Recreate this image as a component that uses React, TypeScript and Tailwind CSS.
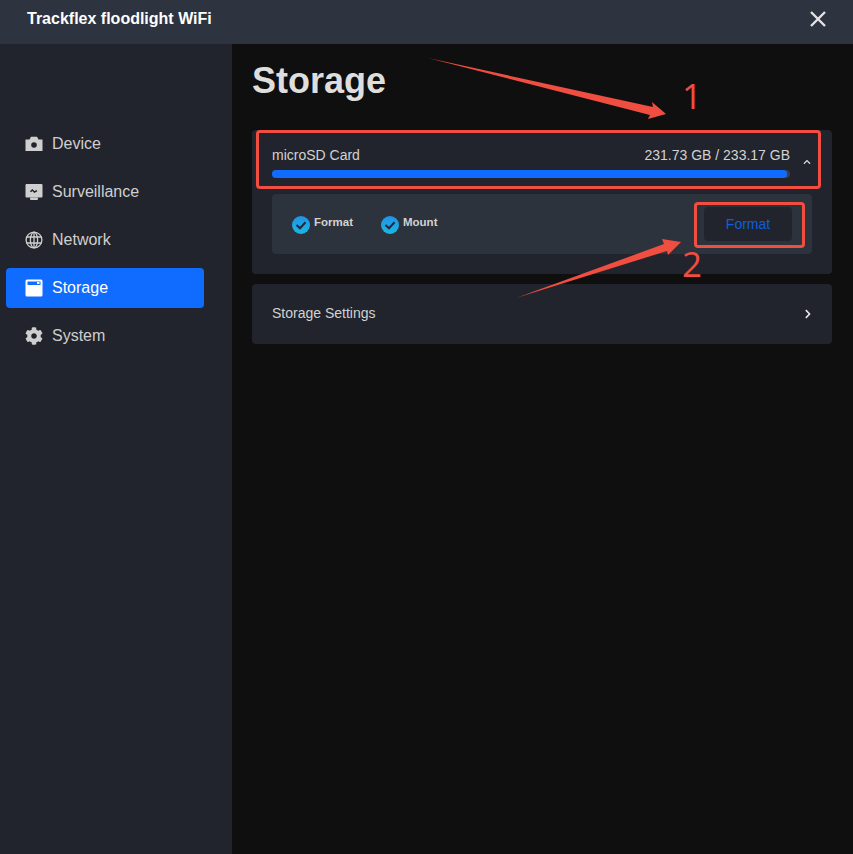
import { FaCog, FaChevronRight, FaChevronUp } from "react-icons/fa";
import { ReactNode } from "react";

function CameraIcon() {
  return (
    <svg viewBox="0 0 18 18" className="w-[18px] h-[18px]">
      <path d="M0.5 4.5 H4.5 L6 1.8 H12 L13.5 4.5 H17.5 V16 H0.5 Z" fill="currentColor" />
      <circle cx="9" cy="10" r="2.8" fill="#21242c" />
    </svg>
  );
}

function MonitorIcon() {
  return (
    <svg viewBox="0 0 18 18" className="w-[18px] h-[18px]">
      <rect x="0.5" y="1" width="17" height="13.5" rx="1" fill="currentColor" />
      <rect x="5" y="14.5" width="8" height="2.5" rx="1" fill="currentColor" />
      <path d="M5.5 8.8 L7.3 7 L9.5 9 L12 7.6" fill="none" stroke="#21242c" strokeWidth="1.5" />
    </svg>
  );
}

function GlobeIcon() {
  return (
    <svg viewBox="0 0 18 18" className="w-[18px] h-[18px]" fill="none" stroke="currentColor" strokeWidth="1.3">
      <circle cx="9" cy="9" r="7.9" />
      <ellipse cx="9" cy="9" rx="3.6" ry="7.9" />
      <path d="M9 1v16M1.2 6h15.6M1.2 12h15.6" />
    </svg>
  );
}

function StorageIcon() {
  return (
    <svg viewBox="0 0 18 18" className="w-[18px] h-[18px]">
      <rect x="0.5" y="0.5" width="17" height="17" rx="1.5" fill="#ffffff" />
      <rect x="2.5" y="2.5" width="13" height="3.5" fill="#0f6cff" />
      <rect x="12" y="3" width="2.5" height="2" fill="#ffffff" />
    </svg>
  );
}

const menu: { label: string; icon: ReactNode; active?: boolean }[] = [
  { label: "Device", icon: <CameraIcon /> },
  { label: "Surveillance", icon: <MonitorIcon /> },
  { label: "Network", icon: <GlobeIcon /> },
  { label: "Storage", icon: <StorageIcon />, active: true },
  { label: "System", icon: <FaCog className="w-[18px] h-[18px]" /> },
];

function CheckItem({ label }: { label: string }) {
  return (
    <div className="flex items-center gap-1">
      <span className="w-[18px] h-[18px] rounded-full bg-linear-to-b from-[#2293e8] to-[#1cb6e0] flex items-center justify-center mt-px">
        <svg viewBox="0 0 18 18" className="w-[18px] h-[18px]" fill="none" stroke="#1f2a40" strokeWidth="2">
          <path d="M4.5 9 L8 12.3 L13.5 6.3" />
        </svg>
      </span>
      <span className="text-[11.5px] font-bold text-[#d2d2d2] -mt-0.5">{label}</span>
    </div>
  );
}

export default function App() {
  return (
    <div className="relative w-[853px] h-[854px] overflow-hidden bg-[#0f0f0f] font-['Liberation_Sans',Arial,sans-serif]">
      <header className="h-11 bg-[#2d343f] flex items-center justify-between pl-[27px] pr-[27px]">
        <h1 className="text-base font-bold text-white -mt-[7px]">Trackflex floodlight WiFi</h1>
        <svg viewBox="0 0 16 16" className="w-4 h-4 -mt-1.5" fill="none" stroke="#e4e4e4" strokeWidth="2.4">
          <path d="M1 1 L15 15 M15 1 L1 15" />
        </svg>
      </header>

      <div className="flex h-[810px]">
        <aside className="w-[232px] bg-[#21242c] pt-20 px-1.5">
          <nav className="flex flex-col gap-2 w-[198px]">
            {menu.map((item) => (
              <div
                key={item.label}
                className={
                  item.active
                    ? "h-10 rounded flex items-center gap-[9px] pl-[19px] bg-[#0f6cff] text-white"
                    : "h-10 rounded flex items-center gap-[9px] pl-[19px] text-[#cfcfcf]"
                }
              >
                {item.icon}
                <span className="text-base">{item.label}</span>
              </div>
            ))}
          </nav>
        </aside>

        <main className="flex-1 pl-5 pr-[21px]">
          <h2 className="text-[36px] leading-[40px] font-bold text-[#dedede] mt-[17px] mb-[29px]">Storage</h2>

          <section className="h-[144px] rounded bg-[#21242c] px-5 pt-[14px]">
            <div className="flex items-start">
              <div className="w-[518px]">
                <div className="flex justify-between items-center h-[22px] text-sm text-[#d2d2d2]">
                  <span>microSD Card</span>
                  <span>231.73 GB / 233.17 GB</span>
                </div>
                <div className="h-2 mt-1 rounded-full bg-[#3a3f49]">
                  <div className="h-2 w-[515px] rounded-full bg-[#0f6cff]" />
                </div>
              </div>
              <FaChevronUp className="w-2 h-2 text-[#d8d8d8] ml-[13px] mt-3.5" />
            </div>
            <div className="h-[60px] mt-4 rounded bg-[#2d333d] flex items-center justify-between pl-5 pr-5">
              <div className="flex items-center gap-7">
                <CheckItem label="Format" />
                <CheckItem label="Mount" />
              </div>
              <button className="w-[88px] h-[34px] rounded bg-[#21242c] text-sm text-[#0f5fd8]">Format</button>
            </div>
          </section>

          <section className="h-[60px] mt-2.5 rounded bg-[#21242c] flex items-center justify-between pl-5 pr-5 text-sm text-[#d2d2d2]">
            <span className="-mt-0.5">Storage Settings</span>
            <FaChevronRight className="w-2.5 h-2.5 text-[#e8e8e8] -mr-px" />
          </section>
        </main>
      </div>

      {/* red annotations drawn over the screenshot */}
      <div className="absolute left-[256px] top-[130px] w-[565px] h-[59px] rounded-sm border-[3px] border-[#f04e41]" />
      <div className="absolute left-[694px] top-[202px] w-[111px] h-[46px] rounded-sm border-[3px] border-[#f04e41]" />
      <svg className="absolute left-0 top-0 w-[853px] h-[854px] pointer-events-none" viewBox="0 0 853 854">
        <polygon points="428,58 653,107 652,102 666,114 648,119 650,115" fill="#f04e41" />
        <polygon points="516,298 664,244 662,239 681,242 668,255 667,251" fill="#f04e41" />
      </svg>
      <span className="absolute left-[682px] top-[72px] text-[35px] leading-[48px] font-normal text-[#f04e41] font-['Open_Sans',sans-serif]">1</span>
      <span className="absolute left-[682px] top-[240px] text-[35px] leading-[48px] font-normal text-[#f04e41] font-['Open_Sans',sans-serif]">2</span>
    </div>
  );
}
